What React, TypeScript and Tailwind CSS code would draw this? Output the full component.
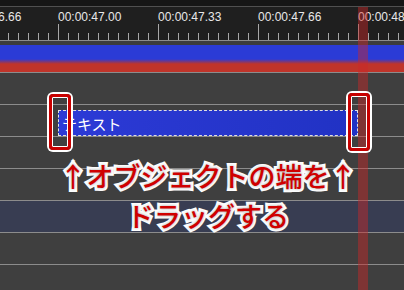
import React from "react"

const labels = ["00:00:46.66", "00:00:47.00", "00:00:47.33", "00:00:47.66", "00:00:48.00"]

// minor tick every 10px, major every 100px
const ticks = Array.from({ length: 40 }, (_, i) => i)

const rows = [0, 1, 2, 3, 4, 5, 6]

const jp = "font-['Noto_Sans_CJK_JP','Noto_Sans',sans-serif]"

function Ruler() {
  return (
    <div className="flex flex-col bg-[#1f1f1f]">
      <div className="h-[6px] bg-[#161616]" />
      <div className="h-px bg-[#505050]" />
      <div className="flex h-[17px] overflow-hidden pt-[3px]">
        <div className="flex ml-[-42px]">
          {labels.map((l) => (
            <div
              key={l}
              className="w-[100px] shrink-0 text-[12px] leading-[14px] text-[#e8e8e8] font-['Liberation_Sans',Arial,sans-serif]"
            >
              {l}
            </div>
          ))}
        </div>
      </div>
      <div className="flex h-[16px] items-end overflow-hidden pl-[8px]">
        {ticks.map((i) => (
          <div key={i} className="w-[10px] shrink-0">
            <div className={`w-px bg-[#a8a8a8] ${i % 10 === 5 ? "h-[16px]" : "h-[7px]"}`} />
          </div>
        ))}
      </div>
      <div className="h-px bg-[#8c8c8c]" />
      <div className="h-[4px] bg-[#3c3c3c]" />
      <div className="h-[27px] bg-[linear-gradient(to_bottom,#2b3bd6_0px,#2b3bd6_14px,#c0342a_19px,#c0342a_27px)]" />
    </div>
  )
}

function Clip() {
  return (
    <div className="ml-[58px] mt-[5px] flex h-[26px] w-[300px] items-center border border-dashed border-[#e0e0e0] bg-[linear-gradient(to_right,#2c3ad6,#2132c4)] pl-[3px]">
      <span className={`text-[15px] leading-none text-white ${jp}`}>テキスト</span>
    </div>
  )
}

function Tracks() {
  return (
    <div className="flex flex-col bg-[#3f3f3f]">
      {rows.map((r) => (
        <div key={r} className="flex flex-col">
          <div className="h-px bg-[#8c8c8c]" />
          <div className={`h-[31px] ${r === 4 ? "bg-[#383d52]" : ""}`}>{r === 1 && <Clip />}</div>
        </div>
      ))}
    </div>
  )
}

const outline =
  "[paint-order:stroke_fill] [-webkit-text-stroke:6px_white] [text-shadow:0_0_3px_rgba(0,0,0,0.4)]"

export default function App() {
  return (
    <div className="relative h-[290px] w-[404px] overflow-hidden bg-[#3f3f3f]">
      <Ruler />
      <Tracks />

      {/* playhead */}
      <div className="absolute left-[358px] top-[7px] h-[283px] w-[10px] bg-[rgba(205,40,40,0.45)]" />

      {/* handle markers */}
      <div className="absolute left-[49px] top-[94px] h-[56px] w-[22px] rounded-[4px] border-[3px] border-[#c80000] shadow-[0_0_0_2px_white,inset_0_0_0_1px_white]" />
      <div className="absolute left-[348px] top-[93px] h-[58px] w-[22px] rounded-[4px] border-[3px] border-[#c80000] shadow-[0_0_0_2px_white,inset_0_0_0_1px_white]" />

      {/* caption */}
      <div
        className={`absolute left-0 top-[156px] flex w-[416px] flex-col items-center text-[27px] font-medium leading-[40px] text-[#d00000] ${jp} ${outline}`}
      >
        <span>↑オブジェクトの端を↑</span>
        <span>ドラッグする</span>
      </div>
    </div>
  )
}
